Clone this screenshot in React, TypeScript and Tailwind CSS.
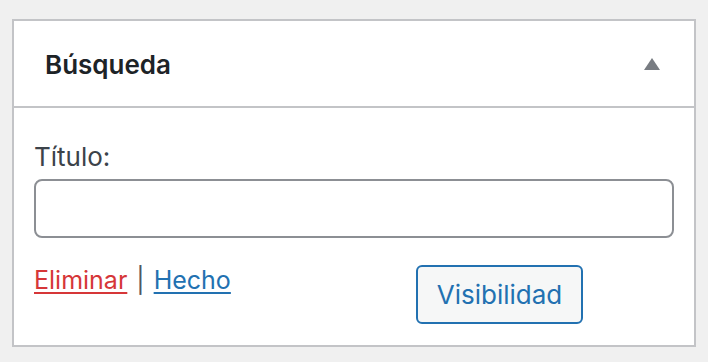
import React from 'react';

export default function App() {
  return (
    <div
      className="w-[708px] h-[362px] bg-[#f0f0f0] pt-[19px] pl-[12px]"
      style={{ fontFamily: 'Inter, "Noto Sans", sans-serif' }}
    >
      <div className="w-[684px] h-[328px] border-2 border-[#c3c4c7] bg-white flex flex-col">
        <div className="h-[87px] border-b-2 border-[#c3c4c7] flex items-center justify-between pl-[31px] pr-[34px]">
          <h3 className="text-[26px] leading-[36px] font-semibold text-[#1d2327] mt-[2px]">Búsqueda</h3>
          <svg width="16" height="12" viewBox="0 0 16 12">
            <polygon points="8,0 16,12 0,12" fill="#787c82" />
          </svg>
        </div>
        <div className="pl-[20px] pr-[20px] pt-[31px]">
          <label className="block text-[26px] leading-[36px] text-[#3c434a]">Título:</label>
          <input
            type="text"
            className="mt-[4px] block w-[640px] h-[59px] border-2 border-[#8c8f94] rounded-[8px] bg-white"
          />
          <div className="flex items-start mt-[24px]">
            <div className="flex text-[25px] leading-[36px] text-[#50575e]">
              <a href="#" className="text-[#d63638] underline underline-offset-[3px] decoration-[2px]">Eliminar</a>
              <span className="mx-[9px]">|</span>
              <a href="#" className="text-[#2271b1] underline underline-offset-[3px] decoration-[2px]">Hecho</a>
            </div>
            <button className="ml-auto mr-[91px] mt-[3px] w-[167px] h-[59px] border-2 border-[#2271b1] rounded-[6px] bg-[#f6f7f7] text-[26px] text-[#2271b1]">
              Visibilidad
            </button>
          </div>
        </div>
      </div>
    </div>
  );
}
